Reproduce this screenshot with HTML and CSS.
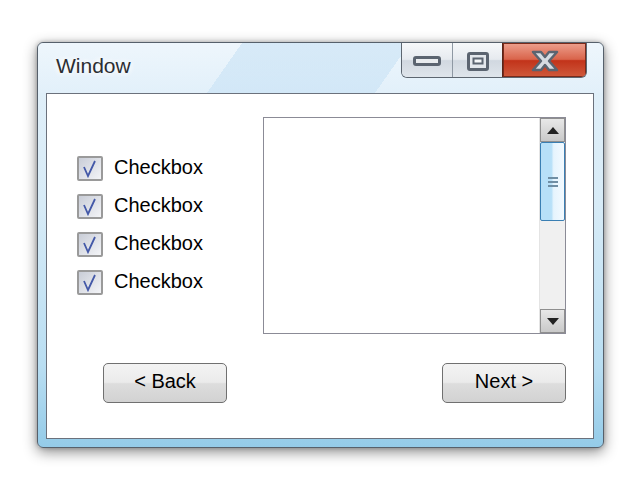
FILE: index.html
```html
<!DOCTYPE html>
<html lang="en">

<head>
    <meta charset="UTF-8">
    <title>Window</title>
    <link rel="stylesheet" href="styles.css">
</head>

<body>
    <div class="window">
        <!-- Title bar -->
        <div class="titlebar">
            <span class="title">Window</span>
            <div class="caption-buttons">
                <div class="cap-btn cap-min">
                    <svg width="28" height="10" viewBox="0 0 28 10"><rect x="1.5" y="1.5" width="25" height="7" rx="1.5" fill="#e9ecef" stroke="#5b6470" stroke-width="3"/></svg>
                </div>
                <div class="cap-btn cap-max">
                    <svg width="22" height="19" viewBox="0 0 22 19"><rect x="1.5" y="1.5" width="19" height="16" rx="1.5" fill="#e3e7ec" stroke="#5b6470" stroke-width="3"/><rect x="6.5" y="6.5" width="9" height="5" fill="#f4f6f8" stroke="#5b6470" stroke-width="2"/></svg>
                </div>
                <div class="cap-btn cap-close">
                    <svg width="32" height="22" viewBox="0 0 32 22"><path d="M4 2 L12 2 L16 7 L20 2 L28 2 L20 11 L28 20 L20 20 L16 15 L12 20 L4 20 L12 11 Z" fill="#d6dbe1" stroke="#5b6470" stroke-width="2.5" stroke-linejoin="round"/></svg>
                </div>
            </div>
        </div>

        <!-- Client area -->
        <div class="content">
            <div class="top-row">
                <div class="checklist">
                    <label class="check-item"><span class="checkbox"></span><span class="check-label">Checkbox</span></label>
                    <label class="check-item"><span class="checkbox"></span><span class="check-label">Checkbox</span></label>
                    <label class="check-item"><span class="checkbox"></span><span class="check-label">Checkbox</span></label>
                    <label class="check-item"><span class="checkbox"></span><span class="check-label">Checkbox</span></label>
                </div>
                <div class="listbox">
                    <div class="list-items"></div>
                    <div class="scrollbar">
                        <div class="scroll-btn"><span class="arrow-up"></span></div>
                        <div class="scroll-track">
                            <div class="thumb">
                                <span class="grip"></span>
                                <span class="grip"></span>
                                <span class="grip"></span>
                            </div>
                        </div>
                        <div class="scroll-btn"><span class="arrow-down"></span></div>
                    </div>
                </div>
            </div>
            <div class="button-row">
                <button class="button">&lt; Back</button>
                <button class="button">Next &gt;</button>
            </div>
        </div>
    </div>
</body>

</html>
```

FILE: styles.css
```css
/* General Reset */
* {
    margin: 0;
    padding: 0;
    box-sizing: border-box;
}

body {
    font-family: 'Liberation Sans', Arial, sans-serif;
    background: #ffffff;
    width: 640px;
    height: 484px;
    overflow: hidden;
}

/* Window frame */
.window {
    margin: 42px 0 0 37px;
    width: 567px;
    height: 406px;
    border: 1px solid #56606b;
    border-radius: 6px;
    background: linear-gradient(180deg, #e4f1fa 0%, #d7ebf7 40%, #b9def2 80%, #94cbe8 100%);
    box-shadow: 0 4px 14px rgba(0, 0, 0, 0.45), 0 0 4px rgba(0, 0, 0, 0.25);
    padding: 0 9px 8px 8px;
    display: flex;
    flex-direction: column;
}

/* Title bar */
.titlebar {
    height: 50px;
    display: flex;
    margin: 0 -9px 0 -8px;
    padding: 0 16px 0 18px;
    border-radius: 6px 6px 0 0;
    background:
        linear-gradient(125deg, transparent 0 34%, rgba(200, 226, 245, 0.6) 34% 62%, transparent 62% 100%),
        linear-gradient(180deg, #eef6fc, #e2f0fa);
}

.title {
    font-size: 21px;
    color: #2b2e33;
    padding-top: 11px;
    text-shadow: 0 0 6px #ffffff, 0 0 6px #ffffff;
}

.caption-buttons {
    margin-left: auto;
    display: flex;
    height: 35px;
    border: 1px solid #5d6670;
    border-top: none;
    border-radius: 0 0 6px 6px;
    overflow: hidden;
}

.cap-btn {
    display: flex;
    align-items: center;
    justify-content: center;
    padding-top: 2px;
}

.cap-min,
.cap-max {
    width: 51px;
    background: linear-gradient(180deg, #f6f8fa 0%, #e6eaef 48%, #d1d8e0 52%, #dfe5eb 100%);
    border-right: 1px solid #8e98a3;
}

.cap-max {
    width: 50px;
    border-right: 1px solid #5a2418;
}

.cap-close {
    width: 83px;
    background: linear-gradient(180deg, #eda08e 0%, #d9644b 48%, #c2331a 52%, #cf5a3c 100%);
    box-shadow: inset 0 0 0 1px #7a2a1a;
}

/* Client area */
.content {
    flex: 1;
    background: #ffffff;
    border: 1px solid #6b717c;
    padding: 23px 27px 0 30px;
}

.top-row {
    display: flex;
    height: 217px;
}

.checklist {
    display: flex;
    flex-direction: column;
    justify-content: center;
    gap: 13px;
}

.check-item {
    display: flex;
    align-items: center;
    font-size: 20px;
    color: #000000;
    height: 25px;
}

.check-label {
    margin-bottom: 3px;
}

.checkbox {
    width: 26px;
    height: 25px;
    margin-right: 11px;
    border: 2px solid #9a9a9a;
    border-radius: 2px;
    background-image:
        url("data:image/svg+xml;utf8,<svg xmlns='http://www.w3.org/2000/svg' width='22' height='21'><path d='M5 9 L9 18 L16 3' fill='none' stroke='%234459a8' stroke-width='1.8'/></svg>"),
        linear-gradient(135deg, #c9cdd7, #f3f4f7);
    background-repeat: no-repeat;
}

/* List box */
.listbox {
    margin-left: auto;
    width: 303px;
    height: 217px;
    border: 1px solid #8b8b96;
    display: flex;
}

.list-items {
    flex: 1;
}

.scrollbar {
    width: 26px;
    display: flex;
    flex-direction: column;
    background: #f0f0f0;
    border-left: 1px solid #e4e4e4;
}

.scroll-btn {
    height: 24px;
    border: 1px solid #8f8f8f;
    background: linear-gradient(180deg, #e8e8e8, #c9c9c9);
    display: flex;
    align-items: center;
    justify-content: center;
}

.arrow-up {
    border-left: 6px solid transparent;
    border-right: 6px solid transparent;
    border-bottom: 7px solid #222222;
}

.arrow-down {
    border-left: 6px solid transparent;
    border-right: 6px solid transparent;
    border-top: 7px solid #222222;
}

.scroll-track {
    flex: 1;
}

.thumb {
    height: 79px;
    border: 1px solid #3a7fb3;
    border-radius: 2px;
    background: linear-gradient(90deg, #b7e0f8 0%, #b7e0f8 45%, #e6f4fd 55%, #f3faff 100%);
    display: flex;
    flex-direction: column;
    align-items: center;
    justify-content: center;
    gap: 2px;
}

.grip {
    width: 10px;
    height: 2px;
    background: #6f8ea4;
}

/* Buttons */
.button-row {
    margin-top: 29px;
    padding-left: 26px;
    display: flex;
    justify-content: space-between;
}

.button {
    width: 124px;
    height: 40px;
    border: 1px solid #707070;
    border-radius: 5px;
    background: linear-gradient(180deg, #f3f3f3 0%, #ebebeb 48%, #dddddd 52%, #d2d2d2 100%);
    font-family: 'Liberation Sans', Arial, sans-serif;
    font-size: 20px;
    color: #000000;
    padding-bottom: 4px;
}
```
